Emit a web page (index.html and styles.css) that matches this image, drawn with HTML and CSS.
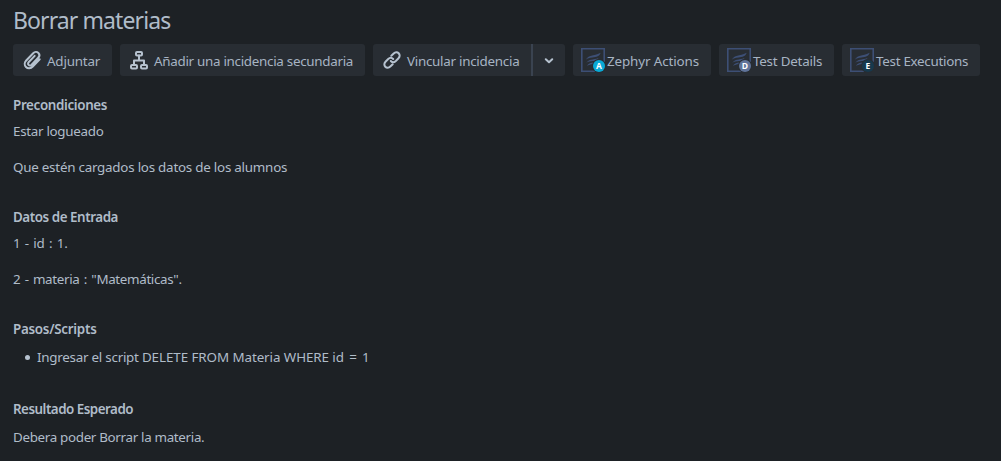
FILE: index.html
```html
<!DOCTYPE html>
<html lang="es">
<head>
<meta charset="utf-8">
<title>Borrar materias</title>
<link rel="stylesheet" href="styles.css">
</head>
<body>
<svg class="defs" aria-hidden="true">
  <symbol id="zephyr" viewBox="0 0 24 24">
    <path d="M23.200 14V.8H.8V23.200H14" fill="none" stroke="#3d4f75" stroke-width="1.600"/>
    <path d="M4.800 11.800C7.500 6.800 12 8.600 19.600 4.800C18.600 8.400 15.500 9.200 11.500 9.500C8.500 9.800 6.500 10.300 4.800 11.800ZM5.200 15C8 10.600 11.500 12 17.600 9.900C15.800 12.900 12.500 13 10 13.200C8 13.400 6.500 13.800 5.200 15ZM6 18C8 14.400 10.500 15.300 14.500 13.800C12.800 16.700 9 16.200 6 18Z" fill="#3d4f75"/>
  </symbol>
</svg>
<main class="issue">
  <h1 class="title">Borrar materias</h1>
  <div class="toolbar">
    <button class="btn attach"><svg class="icon" viewBox="0 0 24 24"><path d="M19.700 11.200L12.800 18.500C10.800 20.600 7.800 20.800 6 19C4.200 17.200 4.300 14.500 6.200 12.500L13.200 5.200C14.700 3.700 17 3.600 18.400 4.900C19.700 6.200 19.600 8.300 18.200 9.800L11.600 16.700C10.700 17.600 9.400 17.700 8.600 16.900C7.800 16.100 7.900 14.900 8.800 14L14.700 7.900"/></svg><span>Adjuntar</span></button>
    <button class="btn child"><svg class="icon" viewBox="0 0 24 24"><rect x="9" y="4" width="6" height="3.500" rx="1"/><rect x="4" y="17" width="6" height="3.500" rx="1"/><rect x="14" y="17" width="6" height="3.500" rx="1"/><path d="M12 7.500v4.500M7 17v-4.500h10V17"/></svg><span>Añadir una incidencia secundaria</span></button>
    <div class="split">
      <button class="btn link"><svg class="icon" viewBox="0 0 24 24"><path d="M11.300 7.800L13.700 5.500C15.200 4 17.400 4 18.700 5.300C20 6.600 20 8.800 18.500 10.300L15.800 13C14.300 14.400 12.200 14.400 10.800 13"/><path d="M12.700 16.200L10.300 18.500C8.800 20 6.600 20 5.300 18.700C4 17.400 4 15.200 5.500 13.700L8.200 11C9.700 9.600 11.800 9.600 13.200 11"/></svg><span>Vincular incidencia</span></button>
      <button class="btn more" aria-label="Más"><svg class="chevron" viewBox="0 0 10 6"><path d="M1.800 1.300L5 4.300L8.200 1.300"/></svg></button>
    </div>
    <button class="btn app actions"><span class="logo"><svg viewBox="0 0 24 24"><use href="#zephyr"/></svg><b class="badge cyan">A</b></span><span>Zephyr Actions</span></button>
    <button class="btn app details"><span class="logo"><svg viewBox="0 0 24 24"><use href="#zephyr"/></svg><b class="badge slate">D</b></span><span>Test Details</span></button>
    <button class="btn app executions"><span class="logo"><svg viewBox="0 0 24 24"><use href="#zephyr"/></svg><b class="badge navy">E</b></span><span>Test Executions</span></button>
  </div>
  <section class="field">
    <h2 class="pre">Precondiciones</h2>
    <p class="logged">Estar logueado</p>
    <p class="loaded">Que estén cargados los datos de los alumnos</p>
  </section>
  <section class="field">
    <h2 class="input">Datos de Entrada</h2>
    <p class="id">1 - id : 1.</p>
    <p class="subject">2 - materia : "Matemáticas".</p>
  </section>
  <section class="field roomy">
    <h2 class="steps">Pasos/Scripts</h2>
    <ul><li><div class="script">Ingresar el script <span class="sql">DELETE FROM Materia WHERE <span class="where">id = 1</span></span></div></li></ul>
  </section>
  <section class="field roomy">
    <h2 class="result">Resultado Esperado</h2>
    <p class="expected">Debera poder Borrar la materia.</p>
  </section>
</main>
</body>
</html>
```
FILE: styles.css
```css
* { box-sizing: border-box; }
body {
  margin: 0;
  height: 461px;
  overflow: hidden;
  background: #1d2125;
  color: #b0bcc9;
  font: 13.4px/20px "Segoe UI", "Noto Sans", sans-serif;
}
.defs { position: absolute; width: 0; height: 0; }
.issue { padding: 4px 13px 0; }
.title { margin: 0 0 8px; font-size: 23px; font-weight: 400; line-height: 32px; letter-spacing: -0.9px; }
.toolbar { display: flex; gap: 8px; margin-bottom: 19px; }
.btn {
  display: flex;
  align-items: center;
  flex: none;
  gap: 3px;
  height: 32px;
  padding: 2px 0 0 7px;
  border: 0;
  border-radius: 3px;
  background: #282d33;
  color: #a7b4c3;
  font: inherit;
  white-space: nowrap;
}
.icon { width: 24px; height: 24px; margin-top: -2px; fill: none; stroke: #b6c2cf; stroke-width: 2; stroke-linecap: round; stroke-linejoin: round; }
.attach { width: 99px; letter-spacing: -0.2px; }
.child { width: 245px; letter-spacing: -0.29px; }
.split { display: flex; gap: 2px; width: 192px; background: linear-gradient(#3a4350, #3a4350) 158px 0 / 2px 32px no-repeat; }
.link { width: 158px; border-radius: 3px 0 0 3px; letter-spacing: -0.27px; }
.more { width: 32px; padding: 0; justify-content: center; border-radius: 0 3px 3px 0; }
.chevron { width: 10px; height: 6px; margin-top: 1px; fill: none; stroke: #b6c2cf; stroke-width: 2; stroke-linecap: round; stroke-linejoin: round; }
.app { padding-left: 8px; gap: 2px; }
.actions { width: 138px; letter-spacing: -0.12px; }
.details { width: 115px; letter-spacing: -0.22px; }
.executions { width: 138px; letter-spacing: -0.28px; }
.logo { position: relative; width: 24px; height: 24px; margin-top: -2px; }
.logo svg { display: block; width: 24px; height: 24px; }
.badge {
  position: absolute;
  left: 12px;
  top: 12px;
  width: 12px;
  height: 12px;
  border-radius: 50%;
  box-shadow: 0 0 0 1px #282d33;
  color: #fff;
  font: 700 8.5px/12px "Open Sans", sans-serif;
  letter-spacing: 0;
  text-align: center;
}
.cyan { background: #09a9d6; }
.slate { background: #5f7399; }
.navy { background: #17394d; }
.field { margin-bottom: 30px; }
.field h2 { margin: 0 0 6px; font-size: 13.4px; line-height: 20px; font-weight: 600; }
.field p { margin: 0 0 16px; }
.field p:last-child { margin-bottom: 0; }
.field .pre { letter-spacing: -0.36px; }
.logged { letter-spacing: -0.3px; }
.loaded { letter-spacing: -0.24px; }
.field .input { letter-spacing: -0.45px; }
.id { letter-spacing: -0.2px; word-spacing: 1.1px; }
.subject { letter-spacing: -0.35px; word-spacing: 1.2px; }
.field .steps { letter-spacing: -0.27px; }
.script { letter-spacing: -0.25px; }
.sql { letter-spacing: -0.08px; }
.where { letter-spacing: 0; word-spacing: 1.7px; }
.field .result { letter-spacing: -0.5px; }
.expected { letter-spacing: -0.33px; }
.roomy { margin-bottom: 32px; }
.roomy h2 { margin-bottom: 8px; }
.field ul { margin: 0; padding-left: 24px; list-style: none; }
.field li { display: flex; align-items: center; margin-left: -12px; }
.field li::before { content: ""; width: 5px; height: 5px; margin: 1px 7px 0 0; border-radius: 50%; background: #b6c2cf; }
```
